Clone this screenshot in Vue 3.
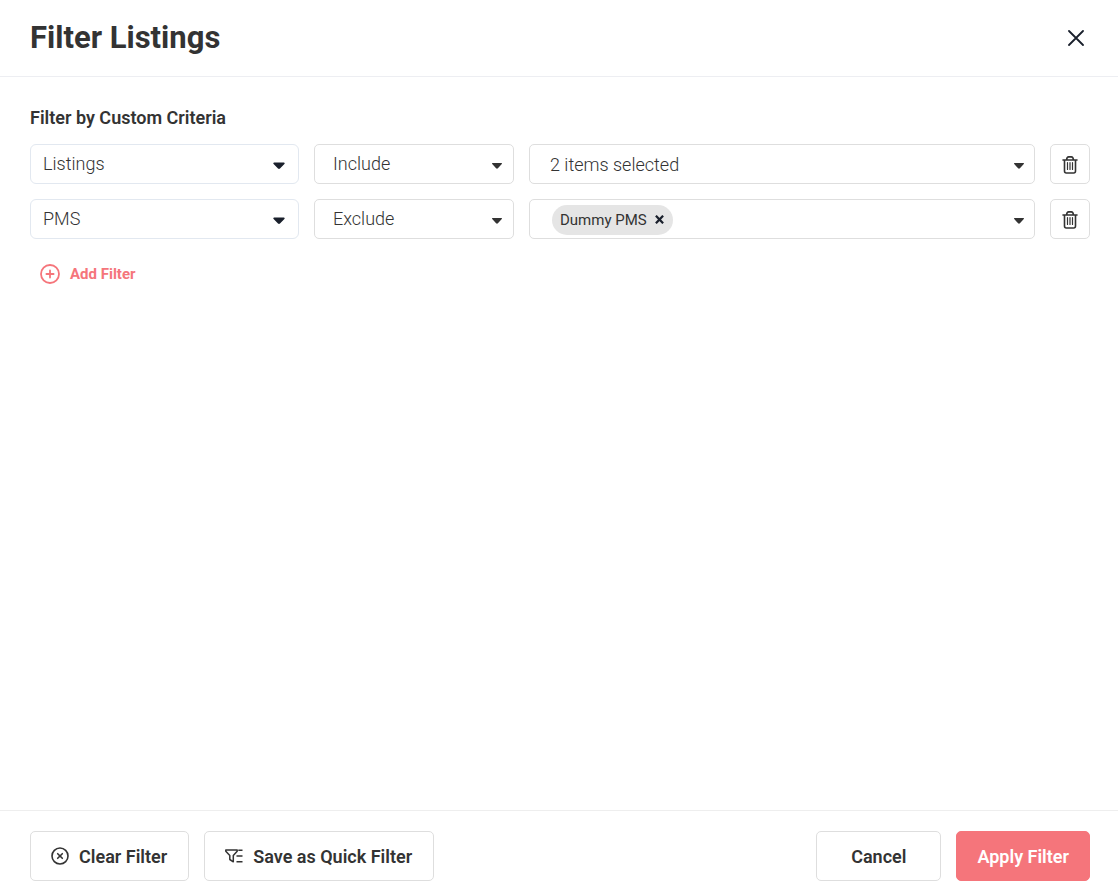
<script setup>
import { ref } from 'vue'

const fields = ['Listings', 'PMS', 'Tags', 'City']
const modes = ['Include', 'Exclude']

const filters = ref([
  { id: 1, field: 'Listings', mode: 'Include', summary: '2 items selected', chips: [] },
  { id: 2, field: 'PMS', mode: 'Exclude', summary: '', chips: ['Dummy PMS'] },
])

let nextId = 3

function addFilter() {
  filters.value.push({ id: nextId++, field: 'Listings', mode: 'Include', summary: '', chips: [] })
}

function removeFilter(id) {
  filters.value = filters.value.filter((row) => row.id !== id)
}

function removeChip(row, chip) {
  row.chips = row.chips.filter((item) => item !== chip)
}

function clearFilters() {
  filters.value = []
}
</script>

<template>
  <form class="dialog" @submit.prevent>
    <header class="header">
      <h1 class="title">Filter Listings</h1>
      <button type="button" class="close" aria-label="Close">
        <svg width="16" height="16" viewBox="0 0 16 16" fill="none" stroke="currentColor" stroke-width="1.8" stroke-linecap="round">
          <path d="M1 1l14 14M15 1L1 15" />
        </svg>
      </button>
    </header>

    <main class="body">
      <h2 class="subtitle">Filter by Custom Criteria</h2>

      <div class="rows">
        <div v-for="row in filters" :key="row.id" class="row">
          <div class="field field-main">
            <select v-model="row.field" class="select" aria-label="Filter field">
              <option v-for="name in fields" :key="name">{{ name }}</option>
            </select>
            <svg class="caret" width="12" height="8" viewBox="0 0 12 8" fill="currentColor">
              <path d="M1.2.5h9.6c.9 0 1.2.9.6 1.5L7 6.600c-.6.6-1.400.6-2 0L.6 2C0 1.400.3.5 1.200.5z" />
            </svg>
          </div>

          <div class="field field-mode">
            <select v-model="row.mode" class="select" aria-label="Filter mode">
              <option v-for="name in modes" :key="name">{{ name }}</option>
            </select>
            <svg class="caret" width="10" height="6" viewBox="0 0 10 6" fill="currentColor">
              <path d="M.6 0h8.800c.6 0 .8.7.4 1.100L5.900 5.300c-.5.5-1.300.5-1.800 0L.2 1.100C-.2.7 0 0 .6 0z" />
            </svg>
          </div>

          <div class="field field-values">
            <span v-if="row.summary" class="summary">{{ row.summary }}</span>
            <span v-for="chip in row.chips" :key="chip" class="chip">
              {{ chip }}
              <button type="button" class="chip-remove" :aria-label="`Remove ${chip}`" @click="removeChip(row, chip)">
                <svg width="9" height="9" viewBox="0 0 9 9" fill="none" stroke="currentColor" stroke-width="2.200">
                  <path d="M.9.700l7.200 7.600M8.100.7L.9 8.300" />
                </svg>
              </button>
            </span>
            <button type="button" class="toggle" aria-label="Choose values" aria-haspopup="listbox">
              <svg width="10" height="6" viewBox="0 0 10 6" fill="currentColor">
                <path d="M.6 0h8.800c.6 0 .8.7.4 1.100L5.900 5.300c-.5.5-1.300.5-1.800 0L.2 1.100C-.2.7 0 0 .6 0z" />
              </svg>
            </button>
          </div>

          <button type="button" class="trash" aria-label="Delete filter" @click="removeFilter(row.id)">
            <svg width="16" height="18" viewBox="0 0 16 18" fill="none" stroke="currentColor" stroke-linecap="round" stroke-linejoin="round">
              <path stroke-width="1.600" d="M1 4h14M2.500 4v11c0 1.400.6 2 1.800 2h7.400c1.200 0 1.800-.6 1.800-2V4M4.600 3.700C4.800 1.800 5.400.9 6.600.9h2.800c1.200 0 1.800.9 2 2.800" />
              <path stroke-width="1.200" d="M5.500 6.500v7M8 6.500v7M10.500 6.500v7" />
            </svg>
          </button>
        </div>
      </div>

      <button type="button" class="add" @click="addFilter">
        <svg width="20" height="20" viewBox="0 0 20 20" fill="none" stroke="currentColor" stroke-width="1.800" stroke-linecap="round">
          <circle cx="10" cy="10" r="9" />
          <path d="M10 6.400v7.200M6.400 10h7.200" />
        </svg>
        Add Filter
      </button>
    </main>

    <footer class="footer">
      <button type="button" class="btn" @click="clearFilters">
        <svg width="18" height="18" viewBox="0 0 18 18" fill="none" stroke="currentColor" stroke-width="1.600" stroke-linecap="round">
          <circle cx="9" cy="9" r="8" />
          <path d="M6.700 6.700l4.600 4.600M11.300 6.700l-4.600 4.600" />
        </svg>
        Clear Filter
      </button>
      <button type="button" class="btn">
        <svg width="18" height="14" viewBox="0 0 18 14" fill="none" stroke="currentColor" stroke-width="1.500" stroke-linejoin="round">
          <path d="M.8 1h11.400v1.300L8.300 6.500v6.300L4.800 10.500v-4L.8 2.300z" />
          <path d="M13.300 1.200h4.200M11.500 7h6M11.500 12.700h6" />
        </svg>
        Save as Quick Filter
      </button>
      <button type="button" class="btn cancel">Cancel</button>
      <button type="submit" class="btn primary">Apply Filter</button>
    </footer>
  </form>
</template>

<style>
body {
  margin: 0;
  background: #fff;
}
</style>

<style scoped>
.dialog {
  display: flex;
  flex-direction: column;
  min-height: 100vh;
  box-sizing: border-box;
  color: #333;
  font-family: Roboto, "Noto Sans", sans-serif;
}

.dialog *,
.dialog *::before {
  box-sizing: border-box;
}

button,
select {
  margin: 0;
  padding: 0;
  border: 0;
  background: none;
  color: inherit;
  font: inherit;
  cursor: pointer;
}

svg {
  display: block;
  flex: none;
}

.header {
  display: flex;
  align-items: center;
  justify-content: space-between;
  padding: 17px 30px 17px 30px;
  border-bottom: 1px solid #edeef2;
}

.title {
  margin: 0;
  font-size: 31px;
  line-height: 42px;
  font-weight: 700;
}

.close {
  display: grid;
  place-items: center;
  width: 25px;
  height: 24px;
  color: #1a202c;
}

.body {
  flex: 1;
  padding: 30px 28px 30px 30px;
}

.subtitle {
  margin: 0 0 15px;
  font-size: 18px;
  line-height: 22px;
  font-weight: 600;
}

.rows {
  display: grid;
  gap: 15px;
}

.row {
  display: grid;
  grid-template-columns: 269px 200px minmax(0, 1fr) 40px;
  gap: 15px;
}

.field {
  position: relative;
  display: flex;
  align-items: center;
  height: 40px;
  border: 1px solid #dedede;
  border-radius: 5px;
  font-size: 18px;
  font-weight: 300;
}

.field-main {
  border-color: #e2e8f0;
  border-radius: 6px;
}

.select {
  width: 100%;
  height: 100%;
  padding: 0 36px 2px 12px;
  border-radius: 5px;
  appearance: none;
}

.field-mode .select {
  padding-left: 18px;
}

.caret {
  position: absolute;
  top: 17px;
  right: 13px;
  color: #1a202c;
  pointer-events: none;
}

.field-mode .caret {
  top: 18px;
  right: 11px;
  color: #333;
}

.field-values {
  padding: 0 10px 0 20px;
}

.chip {
  display: flex;
  align-items: center;
  gap: 8px;
  height: 30px;
  margin: 1px 0 0 2px;
  padding: 0 9px 0 8px;
  border-radius: 15px;
  background: #e5e5e5;
  font-size: 15px;
  font-weight: 400;
}

.chip-remove {
  color: #1a202c;
}

.toggle {
  margin-left: auto;
  padding-top: 4px;
}

.trash {
  display: grid;
  place-items: center;
  height: 40px;
  padding-top: 1px;
  border: 1px solid #dedede;
  border-radius: 5px;
}

.add {
  display: flex;
  align-items: center;
  gap: 10px;
  margin: 25px 0 0 10px;
  color: #f5757b;
  font-size: 15px;
  line-height: 20px;
  font-weight: 700;
}

.footer {
  display: flex;
  gap: 15px;
  padding: 20px 28px 6px 30px;
  border-top: 1px solid #eee;
}

.btn {
  display: flex;
  align-items: center;
  justify-content: center;
  gap: 10px;
  height: 50px;
  padding: 0 21px 0 20px;
  border: 1px solid #dedede;
  border-radius: 5px;
  font-size: 18px;
  font-weight: 600;
  white-space: nowrap;
}

.cancel {
  margin-left: auto;
  padding: 0 34px;
}

.primary {
  padding: 0 20px;
  border-color: #f5757b;
  background: #f5757b;
  color: #fff;
}
</style>
